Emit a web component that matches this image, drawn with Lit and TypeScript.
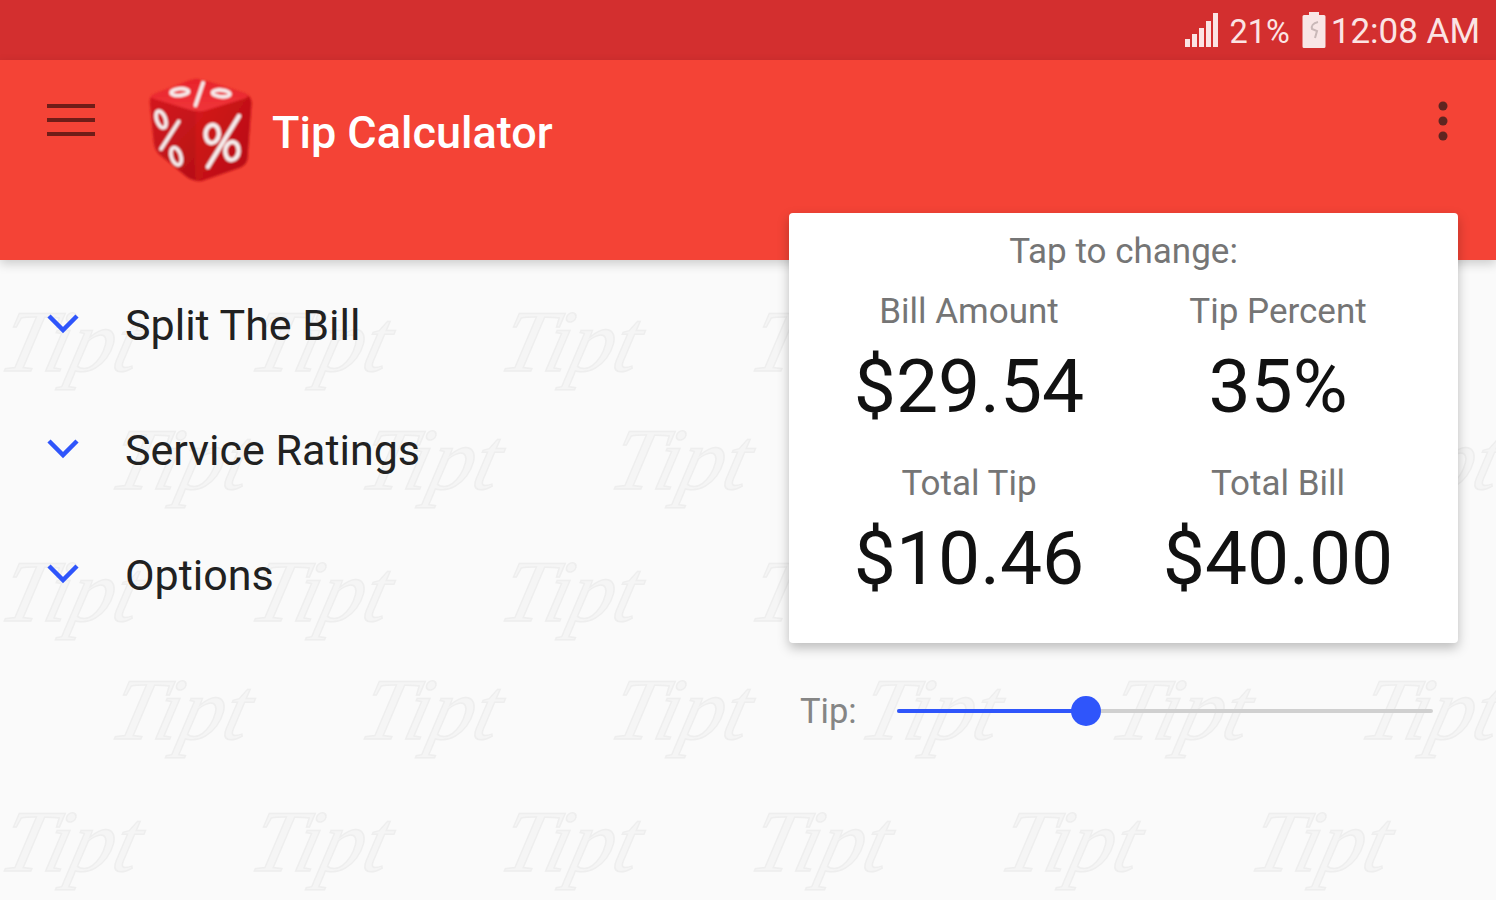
import { LitElement, html, css, svg, type TemplateResult } from 'lit'
import { customElement, property } from 'lit/decorators.js'

@customElement('tip-slider')
export class TipSlider extends LitElement {
  static styles = css`
    :host { display: block; flex: 1; }
    .track { position: relative; height: 4px; background: #d0d0d0; border-radius: 2px; }
    .fill { height: 100%; background: #2f55fb; border-radius: 2px; }
    .thumb {
      position: absolute;
      top: -13px;
      width: 30px;
      height: 30px;
      margin-left: -15px;
      border-radius: 50%;
      background: #2f55fb;
    }
  `

  @property({ type: Number }) value = 35

  render (): TemplateResult {
    return html`
      <div class="track">
        <div class="fill" style="width:${this.value}%"></div>
        <div class="thumb" style="left:${this.value}%"></div>
      </div>
    `
  }
}

@customElement('app-root')
export class AppRoot extends LitElement {
  static styles = css`
    :host {
      display: block;
      font-family: Roboto, "Liberation Sans", sans-serif;
    }

    .page {
      position: relative;
      width: 1496px;
      height: 900px;
      overflow: hidden;
      background: #fafafa;
      display: flex;
      flex-direction: column;
    }

    .watermark { position: absolute; inset: 0; filter: blur(0.7px); }
    .mark {
      position: absolute;
      font: italic 400 88px/88px "Liberation Serif", serif;
      color: #f5f5f5;
      -webkit-text-stroke: 1.5px #eeeeee;
      transform: skewX(-14deg);
      white-space: nowrap;
    }

    .status {
      position: relative;
      height: 60px;
      flex: none;
      background: #d32f2f;
      color: #fbe4e4;
      display: flex;
      justify-content: flex-end;
      align-items: center;
      padding-right: 16px;
      line-height: 60px;
    }
    .signal { width: 36px; height: 36px; margin-right: 9px; }
    .battery { width: 24px; height: 38px; margin: 0 5px 0 12px; }
    .pct { font-size: 32.5px; padding-top: 3px; }
    .clock { font-size: 35px; padding-top: 3px; }

    .toolbar {
      position: relative;
      height: 200px;
      flex: none;
      background: #f44336;
      box-shadow: 0 4px 10px rgba(0, 0, 0, 0.18);
      display: flex;
      align-items: flex-start;
    }
    .menu { width: 48px; height: 32px; margin: 44px 0 0 47px; }
    .logo { width: 107px; height: 107px; margin: 17px 0 0 52px; }
    .title {
      margin: 45px 0 0 18px;
      font-size: 45px;
      font-weight: 500;
      line-height: 56px;
      color: #fff;
    }
    .more { width: 12px; height: 44px; margin: 40px 47px 0 auto; }

    .content {
      position: relative;
      flex: 1;
      display: flex;
    }

    .list { width: 789px; padding-top: 2px; }
    .row {
      height: 125px;
      display: flex;
      align-items: center;
      color: #212121;
      font-size: 43px;
    }
    .chevron { width: 32px; height: 22px; margin: 0 46px 2px 47px; }

    .side { width: 669px; }
    .card {
      position: relative;
      margin-top: -47px;
      height: 430px;
      box-sizing: border-box;
      background: #fff;
      border-radius: 4px;
      box-shadow: 0 5px 12px rgba(0, 0, 0, 0.25);
      padding-top: 17px;
      text-align: center;
      color: #757575;
    }
    .hint { font-size: 35px; line-height: 44px; }
    .grid {
      display: grid;
      grid-template-columns: 309px 309px;
      justify-content: center;
      margin-top: 16px;
    }
    .cell { height: 172px; }
    .label { font-size: 35px; line-height: 44px; }
    .value {
      margin-top: 4px;
      font-size: 75px;
      line-height: 96px;
      color: #111;
    }

    .tip {
      position: relative;
      display: flex;
      align-items: center;
      margin-top: 46px;
      padding: 0 25px 0 11px;
      color: #858585;
      font-size: 34.5px;
      line-height: 44px;
    }
    .tip span { width: 97px; flex: none; }
  `

  private readonly cells = [
    { label: 'Bill Amount', value: '$29.54' },
    { label: 'Tip Percent', value: '35%' },
    { label: 'Total Tip', value: '$10.46' },
    { label: 'Total Bill', value: '$40.00' }
  ]

  private marks (): TemplateResult[] {
    const rows = [
      { y: 298, x: 4 },
      { y: 416, x: 114 },
      { y: 548, x: 4 },
      { y: 666, x: 114 },
      { y: 798, x: 4 }
    ]
    const out: TemplateResult[] = []
    for (const r of rows) {
      for (let i = 0; i < 6; i++) {
        out.push(html`<span class="mark" style="left:${r.x + i * 250}px;top:${r.y}px">Tipt</span>`)
      }
    }
    return out
  }

  private signal (): TemplateResult {
    return html`<svg class="signal" viewBox="0 0 36 36">
      <g fill="#fbe4e4">
        <rect x="1" y="27" width="5" height="8"/>
        <rect x="8" y="22" width="5" height="13"/>
        <rect x="15" y="16" width="5" height="19"/>
        <rect x="22" y="9" width="5" height="26"/>
        <rect x="29" y="1" width="5" height="34"/>
      </g>
    </svg>`
  }

  private battery (): TemplateResult {
    return html`<svg class="battery" viewBox="0 0 24 38">
      <path d="M7 1h10v3h5a1.5 1.5 0 0 1 1.5 1.5v30A1.5 1.5 0 0 1 22 37H2a1.5 1.5 0 0 1-1.5-1.5v-30A1.5 1.5 0 0 1 2 4h5z" fill="#f8e6e6"/>
      <path d="M16 11c-5 1-7 4-6 7l5 2-2 7" fill="none" stroke="#c9b8b8" stroke-width="2"/>
    </svg>`
  }

  private percent (slash: number[], a: number[], b: number[], sw: number) {
    return svg`
      <line x1=${slash[0]} y1=${slash[1]} x2=${slash[2]} y2=${slash[3]} stroke="#f6eeee" stroke-width=${sw} stroke-linecap="round"/>
      <ellipse cx=${a[0]} cy=${a[1]} rx=${a[2]} ry=${a[3]} transform="rotate(${a[4]} ${a[0]} ${a[1]})" fill="none" stroke="#f6eeee" stroke-width=${sw}/>
      <ellipse cx=${b[0]} cy=${b[1]} rx=${b[2]} ry=${b[3]} transform="rotate(${b[4]} ${b[0]} ${b[1]})" fill="none" stroke="#f6eeee" stroke-width=${sw}/>
    `
  }

  private logo (): TemplateResult {
    return html`<svg class="logo" viewBox="50 35 320 320">
      <defs>
        <linearGradient id="top" x1="0" y1="0" x2="0" y2="1">
          <stop offset="0" stop-color="#e8222a"/><stop offset="1" stop-color="#f0353a"/>
        </linearGradient>
        <linearGradient id="left" x1="0" y1="0" x2="1" y2="1">
          <stop offset="0" stop-color="#d81920"/><stop offset="1" stop-color="#a90d12"/>
        </linearGradient>
        <linearGradient id="right" x1="0" y1="0" x2="1" y2="1">
          <stop offset="0" stop-color="#d9161c"/><stop offset="1" stop-color="#b50e12"/>
        </linearGradient>
        <filter id="soft"><feGaussianBlur stdDeviation="2.5"/></filter>
      </defs>
      <g filter="url(#soft)">
        <path d="M198 42Q215 42 345 85Q365 95 362 120L350 280Q348 295 330 305L215 345Q195 350 170 335L85 265Q72 250 70 230L58 110Q58 92 75 84L180 45Q190 42 198 42Z" fill="url(#left)"/>
        <path d="M198 42Q215 42 345 85Q365 95 362 120L350 280Q348 295 330 305L215 345Q205 348 195 345L196 135Q198 125 215 118Z" fill="url(#right)"/>
        <path d="M198 42Q215 42 345 85Q362 92 340 100L225 135Q200 140 175 132L70 100Q52 92 75 84L180 45Q190 42 198 42Z" fill="url(#top)"/>
        ${this.percent([218, 52, 195, 120], [148, 80, 26, 10, -5], [272, 84, 26, 10, 5], 11)}
        ${this.percent([325, 152, 232, 304], [245, 205, 20, 27, 5], [304, 256, 20, 27, 5], 13)}
        ${this.percent([145, 168, 92, 250], [92, 162, 13, 26, -20], [137, 272, 14, 27, -18], 11)}
      </g>
    </svg>`
  }

  private chevron (): TemplateResult {
    return html`<svg class="chevron" viewBox="0 0 32 22">
      <path d="M2 3l14 14L30 3" fill="none" stroke="#2f55fb" stroke-width="4.5"/>
    </svg>`
  }

  render (): TemplateResult {
    return html`
      <div class="page">
        <div class="watermark">${this.marks()}</div>
        <div class="status">
          ${this.signal()}<span class="pct">21%</span>${this.battery()}<span class="clock">12:08 AM</span>
        </div>
        <div class="toolbar">
          <svg class="menu" viewBox="0 0 48 32">
            <g fill="#6f1d18">
              <rect y="0" width="48" height="4"/>
              <rect y="14" width="48" height="4"/>
              <rect y="28" width="48" height="4"/>
            </g>
          </svg>
          ${this.logo()}
          <div class="title">Tip Calculator</div>
          <svg class="more" viewBox="0 0 12 44">
            <g fill="#5e2520">
              <circle cx="6" cy="6" r="4.5"/>
              <circle cx="6" cy="21" r="4.5"/>
              <circle cx="6" cy="36" r="4.5"/>
            </g>
          </svg>
        </div>
        <div class="content">
          <div class="list">
            ${['Split The Bill', 'Service Ratings', 'Options'].map(t => html`
              <div class="row">${this.chevron()}<span>${t}</span></div>
            `)}
          </div>
          <div class="side">
            <div class="card">
              <div class="hint">Tap to change:</div>
              <div class="grid">
                ${this.cells.map(c => html`
                  <div class="cell">
                    <div class="label">${c.label}</div>
                    <div class="value">${c.value}</div>
                  </div>
                `)}
              </div>
            </div>
            <div class="tip">
              <span>Tip:</span>
              <tip-slider .value=${35.2}></tip-slider>
            </div>
          </div>
        </div>
      </div>
    `
  }
}
